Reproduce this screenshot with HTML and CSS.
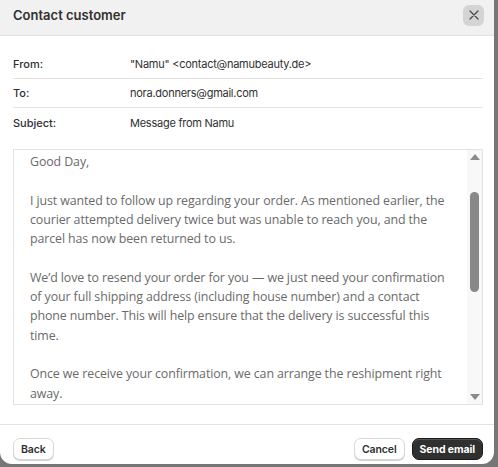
FILE: index.html
```html
<!DOCTYPE html>
<html>
<head>
<meta charset="utf-8">
<link rel="stylesheet" href="styles.css">
</head>
<body>
<div class="modal">
  <div class="header">
    <div class="title">Contact customer</div>
    <button class="close" aria-label="Close">
      <svg width="12" height="12" viewBox="0 0 12 12"><path d="M2 2L10 10M10 2L2 10" stroke="#4a4a4a" stroke-width="1.3" stroke-linecap="round"/></svg>
    </button>
  </div>
  <div class="body">
    <div class="fields">
      <div class="row"><span class="label">From:</span><span class="value">"Namu" &lt;contact@namubeauty.de&gt;</span></div>
      <div class="row"><span class="label">To:</span><span class="value">nora.donners@gmail.com</span></div>
      <div class="row"><span class="label">Subject:</span><span class="value">Message from Namu</span></div>
    </div>
    <div class="editor">
      <div class="text">Good Day,<br><br>I just wanted to follow up regarding your order. As mentioned earlier, the<br>courier attempted delivery twice but was unable to reach you, and the<br>parcel has now been returned to us.<br><br>We’d love to resend your order for you — we just need your confirmation<br>of your full shipping address (including house number) and a contact<br>phone number. This will help ensure that the delivery is successful this<br>time.<br><br>Once we receive your confirmation, we can arrange the reshipment right<br>away.</div>
      <div class="scrollbar">
        <div class="arrow up"></div>
        <div class="track"><div class="thumb"></div></div>
        <div class="arrow down"></div>
      </div>
    </div>
  </div>
  <div class="footer">
    <button class="btn">Back</button>
    <div class="right">
      <button class="btn">Cancel</button>
      <button class="btn primary">Send email</button>
    </div>
  </div>
</div>
</body>
</html>
```
FILE: styles.css
```css
* { box-sizing: border-box; }
html, body { margin: 0; padding: 0; }
body {
  background: #767676;
  width: 498px;
  height: 467px;
  overflow: hidden;
  font-family: Inter, "Liberation Sans", sans-serif;
  color: #303030;
}
.modal {
  width: 494px;
  height: 464px;
  background: #fff;
  border-radius: 0 0 12px 12px;
  display: flex;
  flex-direction: column;
  overflow: hidden;
}
.header {
  height: 36px;
  background: #f1f1f1;
  border-bottom: 1px solid #e3e3e3;
  display: flex;
  align-items: center;
  justify-content: space-between;
  padding: 0 10px 7px 13px;
}
.title {
  font-size: 13px;
  font-weight: 600;
  color: #303030;
  margin-top: 2px;
}
.close {
  width: 21px;
  height: 21px;
  border: none;
  border-radius: 6px;
  background: #d4d4d4;
  display: flex;
  align-items: center;
  justify-content: center;
  padding: 0;
  margin-top: 2px;
}
.body {
  padding: 14px 11px 0 13px;
  flex: 1;
}
.fields { display: flex; flex-direction: column; }
.row {
  display: flex;
  align-items: center;
  height: 29px;
  font-size: 11px;
  border-bottom: 1px solid #e3e3e3;
}
.row:last-child { border-bottom: none; }
.label { width: 117px; font-weight: 500; color: #303030; }
.value { color: #303030; letter-spacing: -0.25px; }
.editor {
  margin-top: 12px;
  height: 256px;
  border: 1px solid #e3e3e3;
  display: flex;
  overflow: hidden;
}
.text {
  flex: 1;
  padding: 2px 0 0 16px;
  font-family: "Open Sans", "Noto Sans", sans-serif;
  font-size: 12.4px;
  line-height: 19.3px;
  color: #6a6a6a;
  white-space: nowrap;
  letter-spacing: -0.1px;
}
.scrollbar {
  width: 15px;
  background: #f8f8f8;
  display: flex;
  flex-direction: column;
  align-items: center;
  padding: 4px 0;
}
.arrow {
  width: 0; height: 0;
  border-left: 5px solid transparent;
  border-right: 5px solid transparent;
}
.arrow.up { border-bottom: 6px solid #8a8a8a; }
.arrow.down { border-top: 6px solid #8a8a8a; }
.track { flex: 1; width: 100%; display: flex; justify-content: center; padding-top: 32px; }
.thumb { width: 9px; height: 100px; background: #888; border-radius: 5px; }
.footer {
  border-top: 1px solid #e3e3e3;
  margin-top: 18px;
  height: 40px;
  display: flex;
  align-items: flex-start;
  justify-content: space-between;
  padding: 13px 11px 0 13px;
}
.right { display: flex; gap: 7px; }
.btn {
  font-family: Inter, "Liberation Sans", sans-serif;
  font-size: 10.5px;
  font-weight: 600;
  color: #303030;
  background: #fff;
  border: 1px solid #d8d8d8;
  border-radius: 7px;
  height: 22px;
  padding: 0 7px;
  box-shadow: 0 1px 0 #d0d0d0;
  letter-spacing: -0.1px;
}
.btn.primary {
  background: #303030;
  color: #fff;
  border-color: #1a1a1a;
  font-weight: 700;
  box-shadow: inset 0 1px 0 #555;
}
```
